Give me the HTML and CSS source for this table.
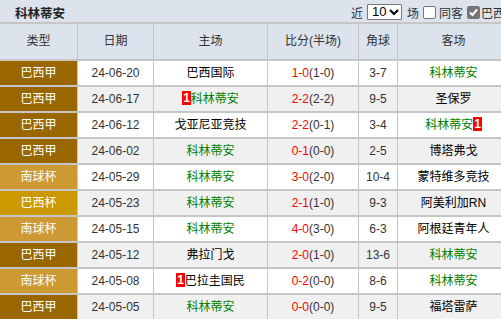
FILE: index.html
```html
<!DOCTYPE html>
<html lang="zh">
<head>
<meta charset="utf-8">
<title>科林蒂安</title>
<link rel="stylesheet" href="styles.css">
</head>
<body>
<div class="page">
  <div class="topbar">
    <div class="title">科林蒂安</div>
    <div class="controls">
      <span class="lbl">近</span>
      <span class="sel-wrap">
        <select class="sel"><option>10</option></select>
        <svg class="chev" width="10" height="8" viewBox="0 0 10 8"><path d="M1 2 L5 6 L9 2" fill="none" stroke="#000" stroke-width="2.2"/></svg>
      </span>
      <span class="lbl">场</span>
      <span class="cb"></span>
      <span class="lbl">同客</span>
      <span class="cb checked"><svg width="11" height="11" viewBox="0 0 11 11"><path d="M2 5.5 L4.5 8 L9 2.5" fill="none" stroke="#fff" stroke-width="2"/></svg></span>
      <span class="lbl tight">巴西甲</span>
    </div>
  </div>
  <div class="grid">
    <div class="row head">
      <div class="c">类型</div><div class="c">日期</div><div class="c">主场</div><div class="c">比分(半场)</div><div class="c">角球</div><div class="c">客场</div>
    </div>
    <div class="row">
      <div class="c t-a">巴西甲</div><div class="c">24-06-20</div><div class="c team">巴西国际</div><div class="c"><span class="ft">1-0</span>(1-0)</div><div class="c">3-7</div><div class="c team me">科林蒂安</div>
    </div>
    <div class="row alt">
      <div class="c t-a">巴西甲</div><div class="c">24-06-17</div><div class="c team me"><span class="badge">1</span>科林蒂安</div><div class="c"><span class="ft">2-2</span>(2-2)</div><div class="c">9-5</div><div class="c team">圣保罗</div>
    </div>
    <div class="row">
      <div class="c t-a">巴西甲</div><div class="c">24-06-12</div><div class="c team">戈亚尼亚竞技</div><div class="c"><span class="ft">2-2</span>(0-1)</div><div class="c">3-4</div><div class="c team me">科林蒂安<span class="badge">1</span></div>
    </div>
    <div class="row alt">
      <div class="c t-a">巴西甲</div><div class="c">24-06-02</div><div class="c team me">科林蒂安</div><div class="c"><span class="ft">0-1</span>(0-0)</div><div class="c">2-5</div><div class="c team">博塔弗戈</div>
    </div>
    <div class="row">
      <div class="c t-b">南球杯</div><div class="c">24-05-29</div><div class="c team me">科林蒂安</div><div class="c"><span class="ft">3-0</span>(2-0)</div><div class="c">10-4</div><div class="c team">蒙特维多竞技</div>
    </div>
    <div class="row alt">
      <div class="c t-c">巴西杯</div><div class="c">24-05-23</div><div class="c team me">科林蒂安</div><div class="c"><span class="ft">2-1</span>(1-0)</div><div class="c">9-3</div><div class="c team">阿美利加RN</div>
    </div>
    <div class="row">
      <div class="c t-b">南球杯</div><div class="c">24-05-15</div><div class="c team me">科林蒂安</div><div class="c"><span class="ft">4-0</span>(3-0)</div><div class="c">6-3</div><div class="c team">阿根廷青年人</div>
    </div>
    <div class="row alt">
      <div class="c t-a">巴西甲</div><div class="c">24-05-12</div><div class="c team">弗拉门戈</div><div class="c"><span class="ft">2-0</span>(1-0)</div><div class="c">13-6</div><div class="c team me">科林蒂安</div>
    </div>
    <div class="row">
      <div class="c t-b">南球杯</div><div class="c">24-05-08</div><div class="c team"><span class="badge">1</span>巴拉圭国民</div><div class="c"><span class="ft">0-2</span>(0-0)</div><div class="c">8-6</div><div class="c team me">科林蒂安</div>
    </div>
    <div class="row alt">
      <div class="c t-a">巴西甲</div><div class="c">24-05-05</div><div class="c team me">科林蒂安</div><div class="c"><span class="ft">0-0</span>(0-0)</div><div class="c">9-5</div><div class="c team">福塔雷萨</div>
    </div>
  </div>
</div>
</body>
</html>
```
FILE: styles.css
```css
html, body {
  margin: 0;
  padding: 0;
  overflow: hidden;
  background: #fff;
}
body {
  font-family: "Liberation Sans", "Noto Sans CJK SC", sans-serif;
  font-size: 12px;
  color: #333;
}
.page {
  width: 520px;
}
.topbar {
  height: 22px;
  background: #dce3ed;
  display: flex;
  align-items: center;
  box-sizing: border-box;
  padding-top: 2px;
}
.title {
  padding-left: 15px;
  font-weight: bold;
  font-size: 12.5px;
  color: #222;
}
.controls {
  margin-left: auto;
  display: flex;
  align-items: center;
  font-size: 12px;
  color: #333;
  margin-right: 3px;
}
.lbl {
  margin: 0 3px;
}
.lbl.tight {
  margin: 0 0 0 1px;
}
.sel-wrap {
  position: relative;
  display: inline-block;
  width: 35px;
  height: 16px;
  margin: 0 2px 0 1px;
}
.sel {
  appearance: none;
  -webkit-appearance: none;
  width: 35px;
  height: 16px;
  box-sizing: border-box;
  border: 1px solid #777;
  border-radius: 1px;
  background: #fff;
  font-family: "Liberation Sans", sans-serif;
  font-size: 13px;
  color: #000;
  padding: 0 0 0 4px;
  margin: 0;
  line-height: 14px;
}
.chev {
  position: absolute;
  right: 3px;
  top: 4px;
  pointer-events: none;
}
.cb {
  display: inline-flex;
  align-items: center;
  justify-content: center;
  width: 13px;
  height: 13px;
  box-sizing: border-box;
  border: 1px solid #767676;
  border-radius: 2px;
  background: #fff;
  margin: 0 0 0 1px;
}
.cb.checked {
  background: #767676;
  margin-left: 1px;
}
.grid {
  width: 510px;
  border-top: 2px solid #c6c6c6;
}
.row {
  display: grid;
  grid-template-columns: 78px 76px 114px 91px 39px 112px;
  border-bottom: 2px solid #c6c6c6;
  background: #fff;
}
.row.alt {
  background: #f0f0f0;
}
.row.head {
  background: #dce3ed;
}
.c {
  box-sizing: border-box;
  border-right: 1px solid #c6c6c6;
  height: 24px;
  line-height: 24px;
  text-align: center;
  white-space: nowrap;
  overflow: hidden;
  color: #333;
}
.head .c {
  height: 35px;
  line-height: 35px;
  color: #333;
}
.t-a { background: #996600; color: #fff; }
.t-b { background: #cc9933; color: #fff; }
.t-c { background: #cc9900; color: #fff; }
.team { color: #000; }
.team.me { color: #008000; }
.ft { color: #ff0000; }
.badge {
  display: inline-block;
  background: #ff0000;
  color: #fff;
  font-weight: bold;
  font-size: 12px;
  line-height: 14px;
  padding: 0 1px;
  vertical-align: 1px;
}
```
